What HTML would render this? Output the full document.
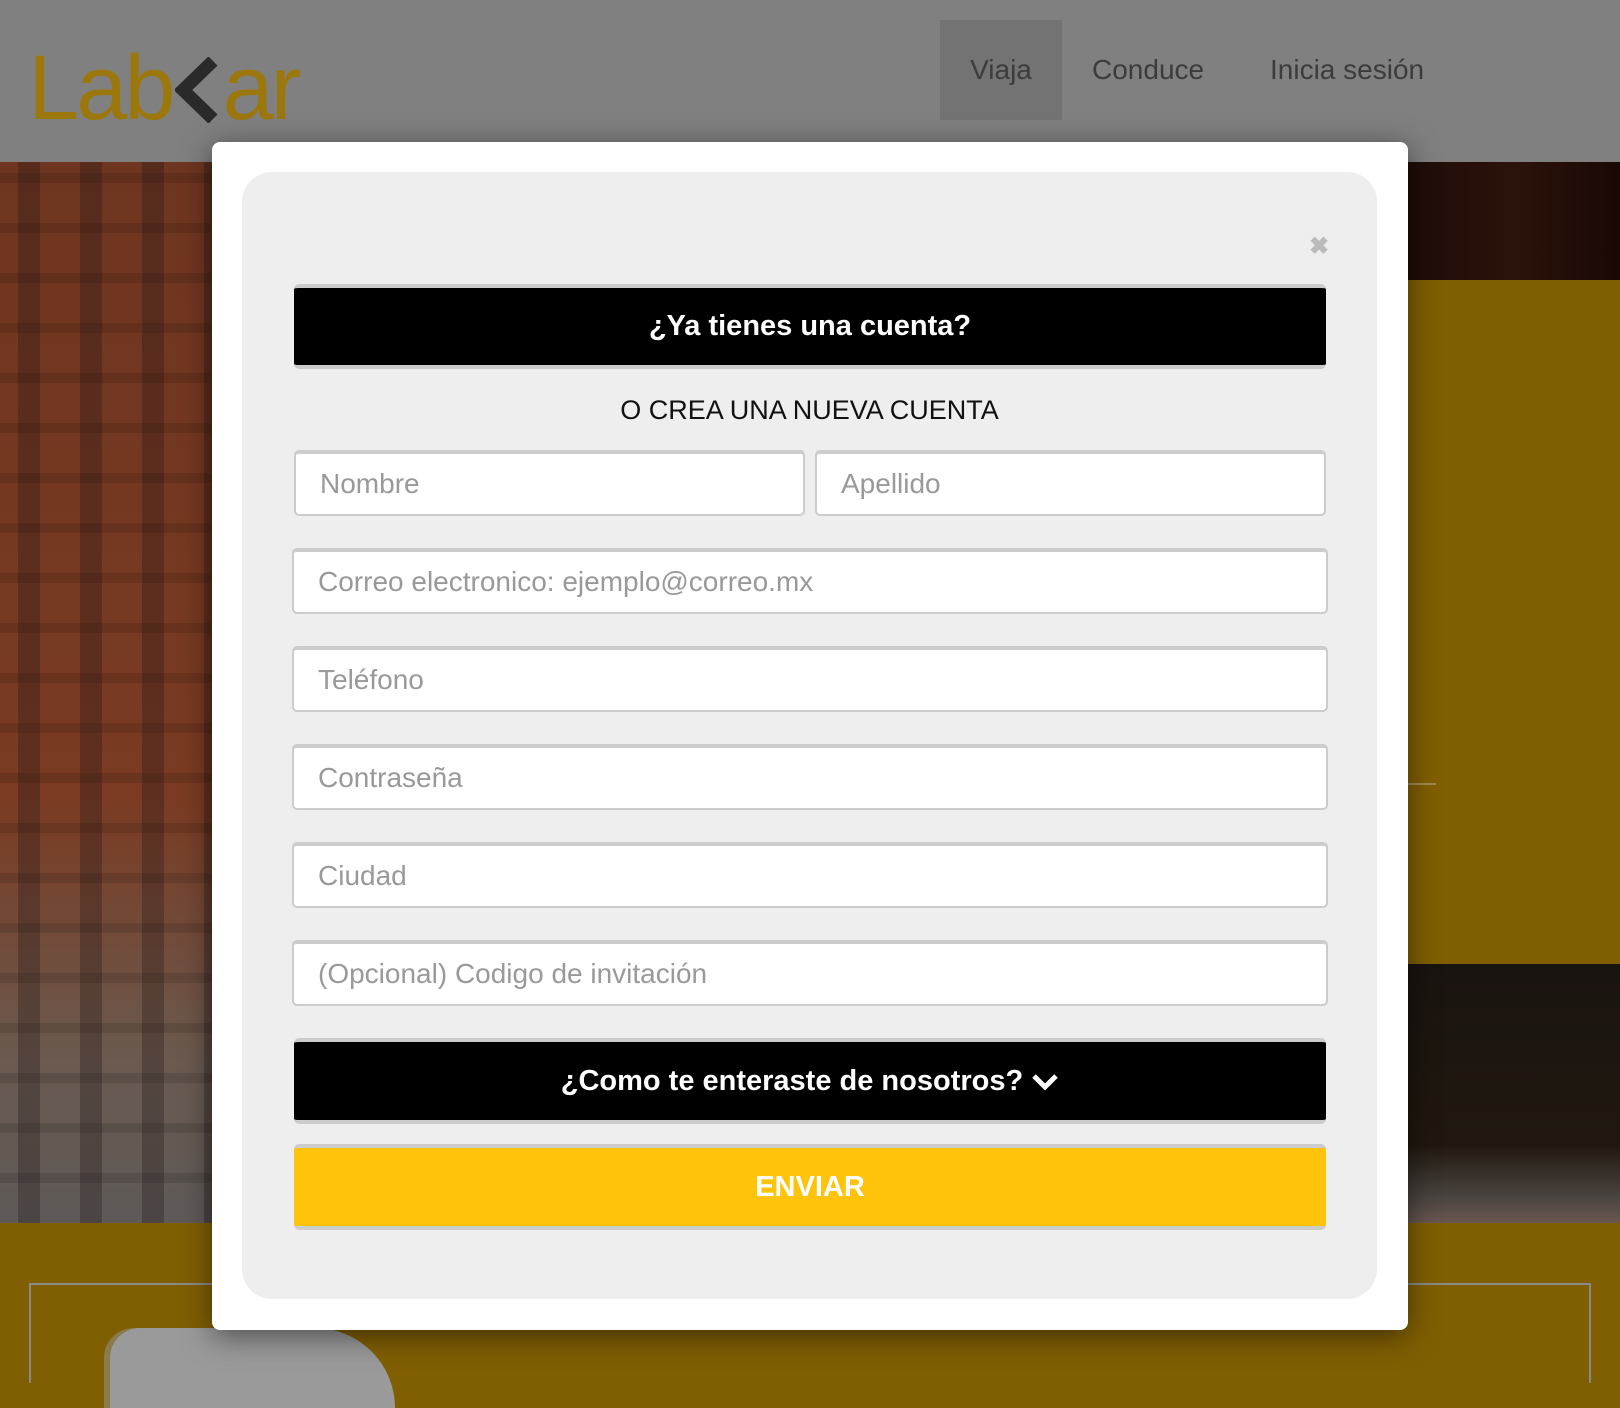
<!DOCTYPE html>
<html><head><meta charset="utf-8">
<style>
*{box-sizing:border-box;margin:0;padding:0}
body{width:1620px;height:1360px;overflow:hidden;position:relative;background:#805f03;font-family:"Liberation Sans",sans-serif}
.hdr{position:absolute;left:0;top:0;width:1620px;height:162px;background:#808080}
.logo{position:absolute;left:28px;top:36px;font-size:92px;font-weight:normal;color:#9c780c;letter-spacing:-3px;white-space:nowrap}
.logo svg{display:inline-block;vertical-align:-4px;margin:0 4px 0 2px}
.nav{position:absolute;top:20px;height:100px;font-size:28px;color:#3c3c3c;line-height:100px}
.photoL{position:absolute;left:0;top:162px;width:212px;height:1061px;
background:
repeating-linear-gradient(90deg,rgba(0,0,0,0) 0 18px,rgba(30,20,20,.3) 18px 40px,rgba(0,0,0,0) 40px 62px),
repeating-linear-gradient(0deg,rgba(0,0,0,0) 0 40px,rgba(0,0,0,.12) 40px 50px),
linear-gradient(180deg,#6e3520 0%,#7a3b22 60%,#6a5a50 85%,#5e5a58 100%)}
.photoR1{position:absolute;left:1408px;top:162px;width:212px;height:118px;background:linear-gradient(90deg,#1e0c08,#2c120a 50%,#1a0805)}
.photoR2{position:absolute;left:1408px;top:964px;width:212px;height:259px;background:linear-gradient(180deg,#1a1410,#20180f 70%,#4a4440 90%,#6a5650)}
.box{position:absolute;left:29px;top:1283px;width:1562px;height:100px;border:2px solid #8a8a8a;border-bottom:none}
.phone{position:absolute;left:110px;top:1328px;width:285px;height:80px;background:#9a9a9a;border-radius:30px 80px 0 0;box-shadow:-6px 0 0 #8a7a50}
.modal{position:absolute;left:212px;top:142px;width:1196px;height:1188px;background:#fff;border-radius:8px;box-shadow:0 6px 30px rgba(0,0,0,.5)}
.panel{position:absolute;left:30px;top:30px;width:1135px;height:1127px;background:#eee;border-radius:30px}
.x{position:absolute;left:1309px;top:232px;font-size:24px;color:#bbb;font-weight:bold}
.btn{position:absolute;left:294px;width:1032px;border-radius:5px;color:#fff;font-weight:bold;text-align:center;border-top:4px solid #ccc;border-bottom:4px solid #ccc}
.in{position:absolute;height:66px;background:#fff;border:2px solid #ccc;border-top-width:4px;border-radius:5px;font-size:28px;color:#999;line-height:60px;padding-left:24px}
.sub{position:absolute;left:242px;width:1135px;top:395px;text-align:center;font-size:27px;color:#111}
</style></head><body>
<div class="hdr">
<div class="logo">Lab<svg width="44" height="66" viewBox="0 0 44 66"><path d="M38 4 L8 33 L38 62" stroke="#2a2a2a" stroke-width="13" fill="none" stroke-linejoin="miter"/></svg>ar</div>
<div class="nav" style="left:940px;width:122px;background:#737373;text-align:center">Viaja</div>
<div class="nav" style="left:1092px">Conduce</div>
<div class="nav" style="left:1270px">Inicia sesión</div>
</div>
<div class="photoL"></div>
<div class="photoR1"></div>
<div class="photoR2"></div>
<div style="position:absolute;left:1408px;top:783px;width:28px;height:2px;background:#a08a50"></div>
<div class="box"></div>
<div class="phone"></div>
<div class="modal"><div class="panel"></div></div>
<div class="x">✖</div>
<div class="btn" style="top:284px;height:85px;background:#000;line-height:77px;font-size:29px">¿Ya tienes una cuenta?</div>
<div class="sub">O CREA UNA NUEVA CUENTA</div>
<div class="in" style="left:294px;top:450px;width:511px">Nombre</div>
<div class="in" style="left:815px;top:450px;width:511px">Apellido</div>
<div class="in" style="left:292px;top:548px;width:1036px">Correo electronico: ejemplo@correo.mx</div>
<div class="in" style="left:292px;top:646px;width:1036px">Teléfono</div>
<div class="in" style="left:292px;top:744px;width:1036px">Contraseña</div>
<div class="in" style="left:292px;top:842px;width:1036px">Ciudad</div>
<div class="in" style="left:292px;top:940px;width:1036px">(Opcional) Codigo de invitación</div>
<div class="btn" style="top:1038px;height:86px;background:#000;line-height:78px;font-size:29px">¿Como te enteraste de nosotros? <svg width="28" height="20" viewBox="0 0 28 20" style="vertical-align:-2px"><path d="M3 4 L14 15 L25 4" stroke="#fff" stroke-width="5" fill="none"/></svg></div>
<div class="btn" style="top:1144px;height:86px;background:#fec30a;line-height:78px;font-size:29px">ENVIAR</div>
</body></html>
